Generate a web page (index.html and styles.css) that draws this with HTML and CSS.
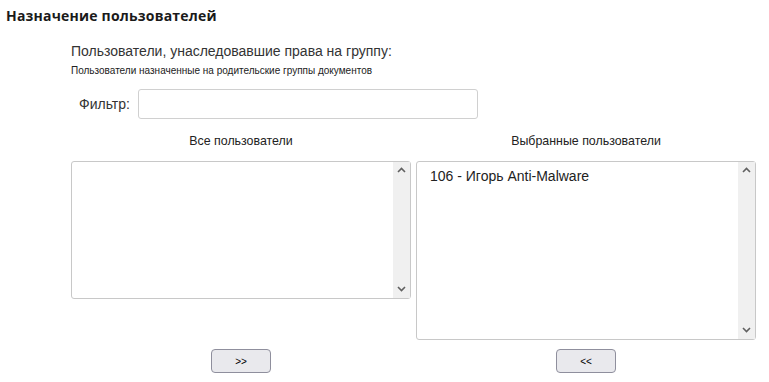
FILE: index.html
```
<!DOCTYPE html>
<html lang="ru">
<head>
    <meta charset="UTF-8">
    <title>Назначение пользователей</title>
    <link rel="stylesheet" href="styles.css">
</head>
<body>
    <h3 class="title">Назначение пользователей</h3>
    <div class="content">
        <div class="inherit">Пользователи, унаследовавшие права на группу:</div>
        <div class="hint">Пользователи назначенные на родительские группы документов</div>
        <div class="filter">
            <label for="filter">Фильтр:</label>
            <input type="text" id="filter">
        </div>
        <div class="lists">
            <div class="col">
                <div class="col-title">Все пользователи</div>
                <div class="listbox short">
                    <div class="items"></div>
                    <div class="scroll">
                        <svg width="9" height="6" viewBox="0 0 9 6"><path d="M1 5 L4.5 1.5 L8 5" fill="none" stroke="#606060" stroke-width="1.6"/></svg>
                        <svg width="9" height="6" viewBox="0 0 9 6"><path d="M1 1 L4.5 4.5 L8 1" fill="none" stroke="#606060" stroke-width="1.6"/></svg>
                    </div>
                </div>
                <button class="move">&gt;&gt;</button>
            </div>
            <div class="col">
                <div class="col-title">Выбранные пользователи</div>
                <div class="listbox tall">
                    <div class="items">
                        <div class="item">106 - Игорь Anti-Malware</div>
                    </div>
                    <div class="scroll">
                        <svg width="9" height="6" viewBox="0 0 9 6"><path d="M1 5 L4.5 1.5 L8 5" fill="none" stroke="#606060" stroke-width="1.6"/></svg>
                        <svg width="9" height="6" viewBox="0 0 9 6"><path d="M1 1 L4.5 4.5 L8 1" fill="none" stroke="#606060" stroke-width="1.6"/></svg>
                    </div>
                </div>
                <button class="move">&lt;&lt;</button>
            </div>
        </div>
    </div>
</body>
</html>
```

FILE: styles.css
```
body {
    margin: 0;
    font-family: "Liberation Sans", Arial, sans-serif;
    color: #222;
    background-color: #fff;
}
.title {
    margin: 0;
    padding: 6px 0 0 6px;
    font-family: "Open Sans", sans-serif;
    font-size: 14px;
    font-weight: bold;
    line-height: 20px;
    letter-spacing: 0.2px;
    color: #1a1a1a;
}
.content {
    padding-left: 71px;
}
.inherit {
    margin-top: 16px;
    font-size: 14px;
    line-height: 18px;
    color: #333;
}
.hint {
    margin-top: 5px;
    font-size: 10px;
    line-height: 12px;
    color: #222;
}
.filter {
    display: flex;
    align-items: center;
    margin-top: 12px;
    padding-left: 8px;
}
.filter label {
    font-size: 14px;
    color: #333;
    margin-right: 8px;
}
.filter input {
    width: 340px;
    height: 30px;
    box-sizing: border-box;
    border: 1px solid #d0d0d0;
    border-radius: 3px;
    margin: 0;
}
.lists {
    display: flex;
    gap: 5px;
    margin-top: 12px;
}
.col {
    width: 340px;
    display: flex;
    flex-direction: column;
    align-items: center;
}
.col-title {
    font-size: 12.4px;
    line-height: 20px;
    color: #222;
    margin-bottom: 10px;
}
.listbox {
    width: 340px;
    box-sizing: border-box;
    border: 1px solid #c8c8c8;
    border-radius: 3px;
    display: flex;
    background: #fff;
}
.short {
    height: 138px;
}
.tall {
    height: 179px;
}
.items {
    flex: 1;
    padding: 6px 0 0 13px;
}
.item {
    font-size: 14px;
    line-height: 16px;
    color: #222;
}
.scroll {
    width: 17px;
    background-color: #f0f0f0;
    display: flex;
    flex-direction: column;
    justify-content: space-between;
    align-items: center;
    padding: 5px 0 6px;
    box-sizing: border-box;
}
.scroll svg {
    display: block;
}
.move {
    margin-top: 9px;
    width: 60px;
    height: 24px;
    background-color: #e9e9ed;
    border: 1px solid #8f8f9d;
    border-radius: 4px;
    font-family: "Liberation Sans", Arial, sans-serif;
    font-size: 10px;
    color: #000;
    padding: 0;
}
.col:first-child .move {
    margin-top: 50px;
}
```
